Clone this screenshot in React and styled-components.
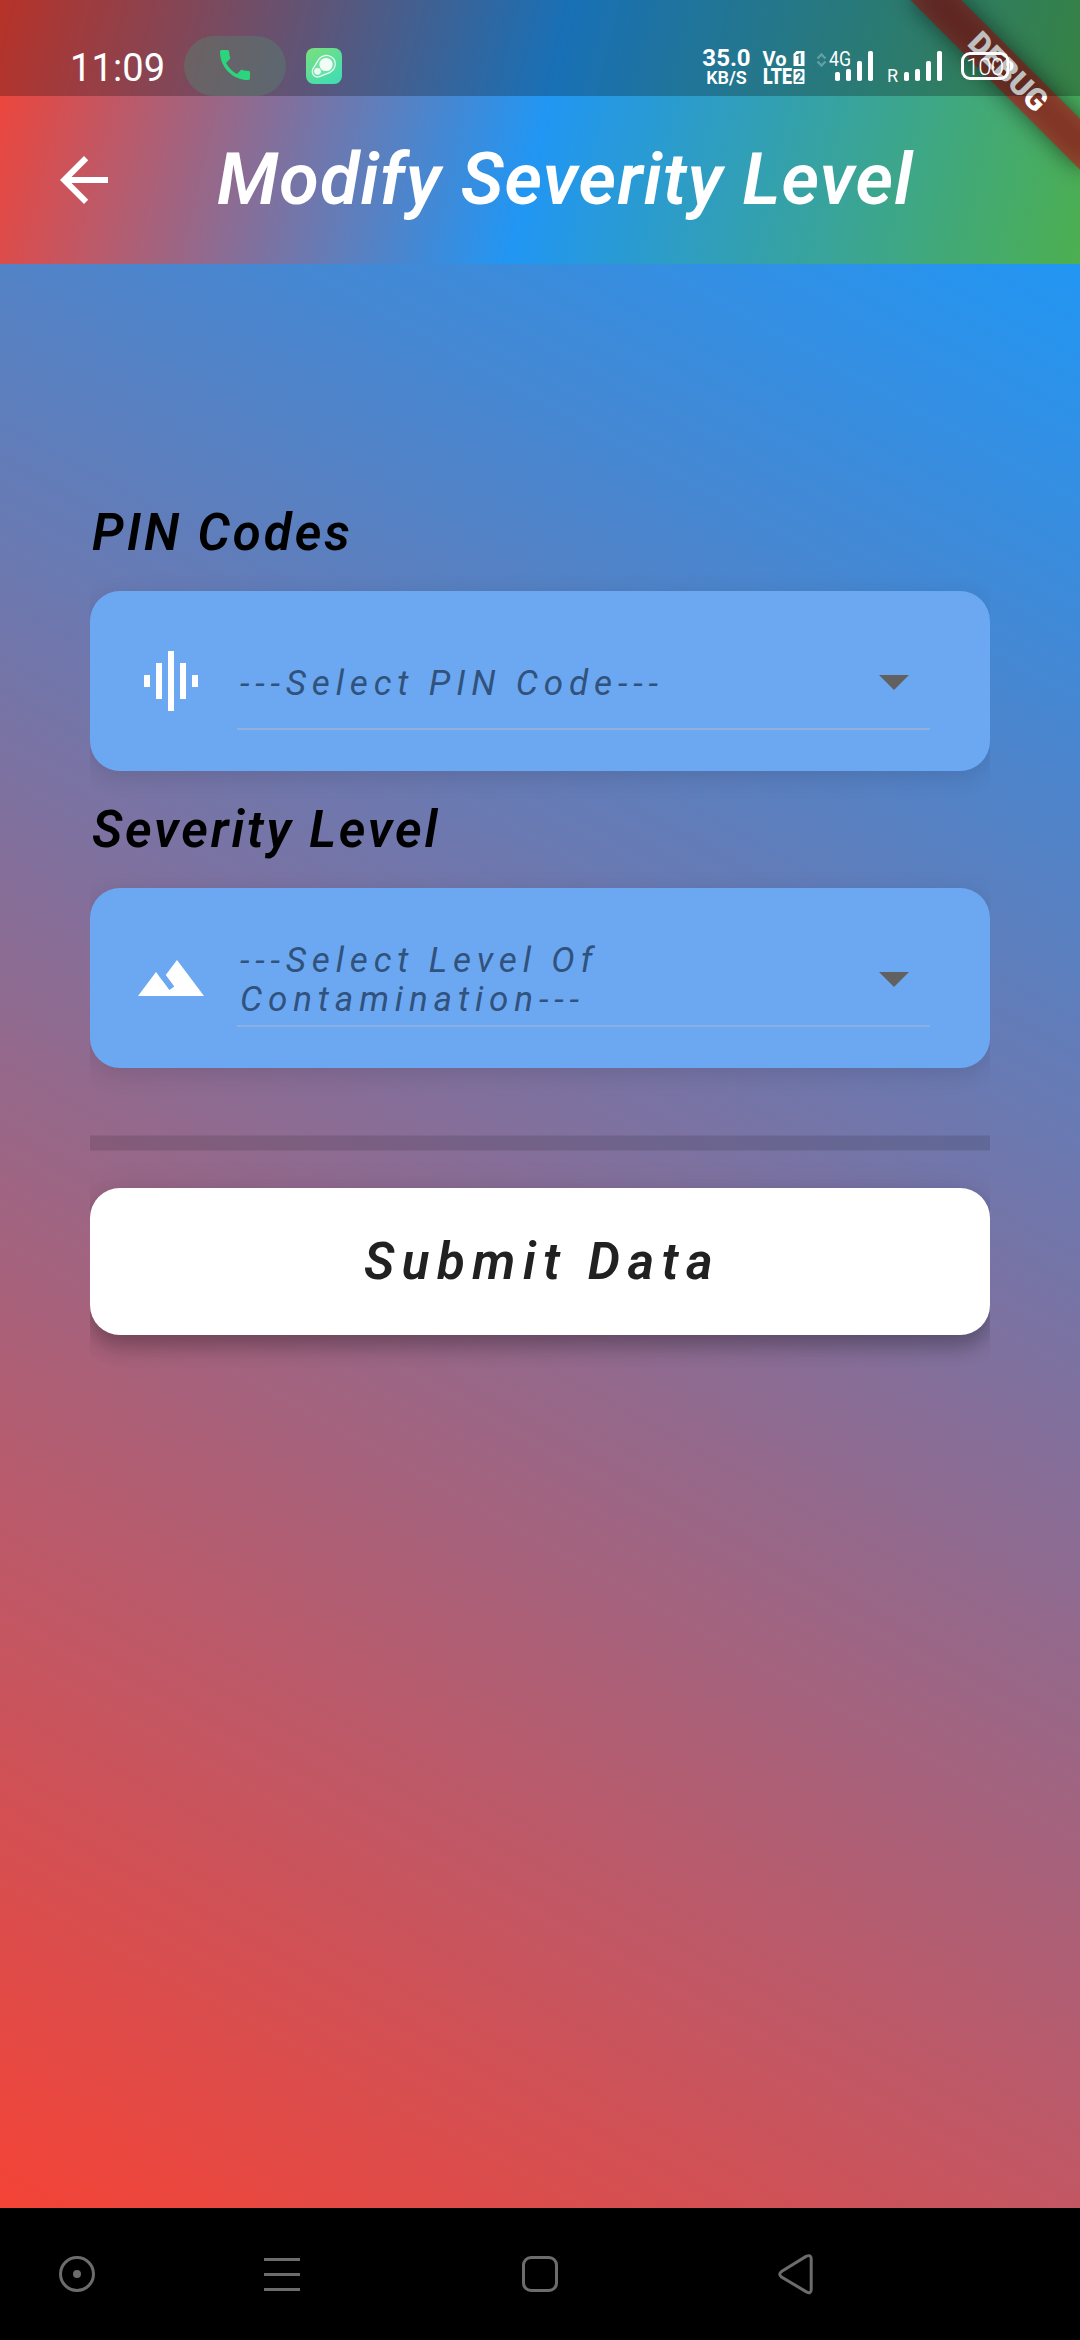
import React from "react";
import styled, { createGlobalStyle } from "styled-components";

const GlobalStyle = createGlobalStyle`
  * { box-sizing: border-box; }
  body { margin: 0; background: #000; }
`;

const Screen = styled.div`
  width: 1080px;
  height: 2340px;
  display: flex;
  flex-direction: column;
  overflow: hidden;
  font-family: Roboto, "Noto Sans", sans-serif;
`;

/* ---------- App bar ---------- */

const AppBar = styled.header`
  position: relative;
  flex: 0 0 264px;
  display: flex;
  flex-direction: column;
  overflow: hidden;
  color: #fff;
  background: linear-gradient(103.74deg, #f44336 0%, #2196f3 50%, #4caf50 100%);
`;

const StatusBar = styled.div`
  position: relative;
  z-index: 2;
  flex: 0 0 96px;
  display: flex;
  align-items: flex-start;
  padding: 0 66px 0 70px;
  background: rgba(0, 0, 0, 0.25);
`;

const Clock = styled.time`
  width: 114px;
  padding-top: 46px;
  font-size: 38px;
  line-height: 44px;
  letter-spacing: 0.1px;
`;

const CallPill = styled.div`
  width: 102px;
  height: 60px;
  margin-top: 36px;
  display: flex;
  justify-content: center;
  padding-top: 9px;
  border-radius: 30px;
  background: rgba(88, 124, 110, 0.5);
`;

const AppBadge = styled.svg`
  width: 36px;
  height: 36px;
  margin: 48px 0 0 20px;
`;

const Indicators = styled.div`
  margin-left: auto;
  display: flex;
  align-items: flex-start;
`;

const NetSpeed = styled.div`
  width: 49px;
  margin-right: 11px;
  padding-top: 46px;
  display: flex;
  flex-direction: column;
  align-items: center;
  font-weight: 700;
  font-size: 24px;
  line-height: 24px;
`;

const NetUnit = styled.span`
  font-size: 18px;
  line-height: 15px;
  font-weight: 600;
`;

const IndicatorIcon = styled.svg`
  width: ${(p) => p.$width}px;
  height: 44px;
  margin: 46px ${(p) => p.$after}px 0 0;
  overflow: visible;
  font-family: Roboto, "Noto Sans", sans-serif;
`;

const DebugRibbon = styled.div`
  position: absolute;
  z-index: 1;
  left: 960px;
  top: 84px;
  width: 240px;
  height: 36px;
  display: flex;
  align-items: center;
  justify-content: center;
  transform-origin: 120px -84px;
  transform: rotate(45deg);
  font-size: 30.6px;
  line-height: 36px;
  font-weight: 900;

  &::before,
  &::after {
    content: "";
    position: absolute;
    inset: 0;
    z-index: -1;
  }

  &::before {
    background: rgba(0, 0, 0, 0.5);
    filter: blur(11.9px);
  }

  &::after {
    background: rgba(183, 28, 28, 0.627);
  }
`;

const Toolbar = styled.div`
  flex: 1;
  display: flex;
  align-items: center;
  padding-left: 48px;
`;

const MaterialIcon = styled.svg`
  flex: none;
  width: ${(p) => p.$size || 72}px;
  height: ${(p) => p.$size || 72}px;
  fill: ${(p) => p.$color || "#fff"};
`;

const Title = styled.h1`
  margin: 0 0 0 97px;
  font-size: 72px;
  line-height: 84px;
  font-style: italic;
  font-weight: 600;
  letter-spacing: 1.2px;
  white-space: nowrap;
`;

/* ---------- Form ---------- */

const Body = styled.main`
  flex: 1;
  display: flex;
  flex-direction: column;
  padding: 0 90px;
  background: linear-gradient(29.05deg, #f44336, #2196f3);
`;

const Form = styled.div`
  flex: 1;
  display: flex;
  flex-direction: column;
  padding-top: 239px;
  overflow-x: clip;
`;

const Label = styled.div`
  height: 60px;
  margin-bottom: 28px;
  padding-left: 2px;
  font-size: 51px;
  line-height: 60px;
  font-style: italic;
  font-weight: 600;
  letter-spacing: ${(p) => p.$spacing}px;
  color: #000;
`;

const Card = styled.div`
  height: 180px;
  margin-bottom: ${(p) => p.$after}px;
  display: flex;
  align-items: center;
  gap: 30px;
  padding: 0 60px 0 45px;
  border-radius: 30px;
  background: #6ca8f1;
  box-shadow: 0 6px 24px rgba(0, 0, 0, 0.12);
`;

const Select = styled.div`
  flex: 1;
  height: 98px;
  display: flex;
  align-items: center;
  justify-content: space-between;
  padding-top: 2px;
  border-bottom: 2px solid ${(p) => p.$line};
`;

const Hint = styled.div`
  width: 500px;
  margin-top: 4px;
  padding-left: 3px;
  font-size: 35px;
  line-height: 39px;
  font-style: italic;
  letter-spacing: 5.88px;
  color: #30527c;
`;

const Divider = styled.div`
  height: 16px;
  margin-bottom: 37px;
  border: solid rgba(0, 0, 0, 0.06);
  border-width: 1px 0;
  background: rgba(0, 0, 0, 0.12);
  background-clip: padding-box;
`;

const SubmitButton = styled.button`
  height: 147px;
  padding: 0 0 0 4px;
  border: 0;
  border-radius: 30px;
  background: #fff;
  color: #212121;
  font: italic 600 51px/60px Roboto, "Noto Sans", sans-serif;
  letter-spacing: 7.6px;
  box-shadow: 0 12px 20px rgba(0, 0, 0, 0.26), 0 3px 36px rgba(0, 0, 0, 0.08);
`;

/* ---------- System navigation ---------- */

const NavBar = styled.nav`
  flex: 0 0 132px;
  display: flex;
  align-items: center;
  padding-left: 57px;
  background: #000;
`;

const NavIcon = styled.svg`
  width: 40px;
  height: 44px;
  margin-right: ${(p) => p.$after}px;
  fill: none;
  stroke: #6c6c6c;
  stroke-width: 3;
`;

function Bars({ x }) {
  return (
    <g fill="#fff">
      <rect x={x} y="26" width="5" height="9" rx="1.8" />
      <rect x={x + 11} y="23" width="5" height="12" rx="1.8" />
      <rect x={x + 22} y="15" width="5" height="20" rx="1.8" />
      <rect x={x + 33} y="5" width="5" height="30" rx="1.8" />
    </g>
  );
}

const ICONS = {
  back: "M20 11H7.83l5.59-5.59L12 4l-8 8 8 8 1.41-1.41L7.83 13H20v-2z",
  call: "M6.62 10.79c1.44 2.83 3.76 5.14 6.59 6.59l2.2-2.2c.27-.27.67-.36 1.02-.24 1.12.37 2.33.57 3.57.57.55 0 1 .45 1 1V20c0 .55-.45 1-1 1-9.39 0-17-7.61-17-17 0-.55.45-1 1-1h3.5c.55 0 1 .45 1 1 0 1.25.2 2.45.57 3.57.11.35.03.74-.25 1.02l-2.2 2.2z",
  wave: "M7 18h2V6H7v12zm4 4h2V2h-2v20zm-8-8h2v-4H3v4zm12 4h2V6h-2v12zm4-8v4h2v-4h-2z",
  landscape: "M14 6l-3.75 5 2.85 3.8-1.6 1.2C9.81 13.75 7 10 7 10l-6 8h22L14 6z",
  dropdown: "M7 10l5 5 5-5z",
};

function Icon({ name, size, color }) {
  return (
    <MaterialIcon viewBox="0 0 24 24" $size={size} $color={color}>
      <path d={ICONS[name]} />
    </MaterialIcon>
  );
}

function SelectCard({ icon, hint, line, after }) {
  return (
    <Card $after={after}>
      <Icon name={icon} />
      <Select $line={line}>
        <Hint>{hint}</Hint>
        <Icon name="dropdown" color="#616161" />
      </Select>
    </Card>
  );
}

export default function App() {
  return (
    <Screen>
      <GlobalStyle />
      <AppBar>
        <StatusBar>
          <Clock>11:09</Clock>
          <CallPill>
            <Icon name="call" size={40} color="#2bd47d" />
          </CallPill>
          <AppBadge viewBox="0 0 36 36">
            <defs>
              <linearGradient id="badge" x1="0" y1="0" x2="0.6" y2="1">
                <stop offset="0" stopColor="#7be07c" />
                <stop offset="1" stopColor="#45dcb0" />
              </linearGradient>
            </defs>
            <rect width="36" height="36" rx="8" fill="url(#badge)" />
            <path
              d="M13.2 10.6 L7 20.6 C4.6 25.6 8.6 30.4 13.4 28.6 L23.6 24.6 C30.6 21 31 12.2 25.6 9 C21.4 6.4 16 7.2 13.2 10.6 Z"
              fill="rgba(255,255,255,0.12)"
              stroke="#e6fbef"
              strokeWidth="1.2"
            />
            <circle cx="20" cy="16.5" r="6.6" fill="#f2fdf7" />
            <circle cx="11.5" cy="23.3" r="3.4" fill="#eafbf2" />
          </AppBadge>
          <Indicators>
            <NetSpeed>
              35.0
              <NetUnit>KB/S</NetUnit>
            </NetSpeed>
            <IndicatorIcon $width={43} $after={12} viewBox="0 0 43 44">
              <g fill="#fff" fontWeight="700">
                <text x="0.5" y="19.5" fontSize="20.5" textLength="24" lengthAdjust="spacingAndGlyphs">Vo</text>
                <text x="1" y="37.5" fontSize="21.5" fontWeight="900" textLength="29" lengthAdjust="spacingAndGlyphs">LTE</text>
                <path d="M34.500 5H42.500V20H31.500V8Z" />
                <rect x="31.5" y="23" width="11" height="15" rx="1" />
              </g>
              <g fill="#277b8b" fontWeight="700" fontSize="15" textAnchor="middle">
                <text x="37" y="18">1</text>
                <text x="37" y="36">2</text>
              </g>
            </IndicatorIcon>
            <IndicatorIcon $width={56} $after={14} viewBox="0 0 56 44">
              <g fill="none" stroke="#fff" strokeOpacity="0.28" strokeWidth="2.4">
                <path d="M0.5 12.5L4.5 8.5L8.5 12.5M0.5 15.5L4.5 19.5L8.5 15.5" />
              </g>
              <text x="12" y="19.5" fontSize="20.5" fill="#fff" textLength="22" lengthAdjust="spacingAndGlyphs">4G</text>
              <Bars x={18} />
            </IndicatorIcon>
            <IndicatorIcon $width={57} $after={17} viewBox="0 0 57 44">
              <text x="0" y="36" fontSize="18" fill="#fff">R</text>
              <Bars x={17} />
            </IndicatorIcon>
            <IndicatorIcon $width={53} $after={0} viewBox="0 0 53 44">
              <rect x="1.5" y="7.5" width="45.5" height="25" rx="7.5" fill="none" stroke="#fff" strokeWidth="3" />
              <path d="M48.5 15a4 5 0 0 1 0 10z" fill="#fff" />
              <text x="5" y="28.5" fontSize="24" fontWeight="300" fill="#fff" textLength="38">100</text>
            </IndicatorIcon>
          </Indicators>
        </StatusBar>
        <DebugRibbon>DEBUG</DebugRibbon>
        <Toolbar>
          <Icon name="back" />
          <Title>Modify Severity Level</Title>
        </Toolbar>
      </AppBar>

      <Body>
        <Form>
          <Label $spacing={3}>PIN Codes</Label>
          <SelectCard icon="wave" hint="---Select PIN Code---" line="#90b1dc" after={29} />
          <Label $spacing={2.8}>Severity Level</Label>
          <SelectCard
            icon="landscape"
            hint="---Select Level Of Contamination---"
            line="#8bb0e1"
            after={67}
          />
          <Divider />
          <SubmitButton>Submit Data</SubmitButton>
        </Form>
      </Body>

      <NavBar>
        <NavIcon $after={167} viewBox="0 0 40 44">
          <circle cx="20" cy="22" r="16.5" />
          <circle cx="20" cy="22" r="4" fill="#6c6c6c" stroke="none" />
        </NavIcon>
        <NavIcon $after={216} viewBox="0 0 40 44">
          <path d="M0 7.5H36M0 22.5H36M0 37.5H36" />
        </NavIcon>
        <NavIcon $after={216} viewBox="0 0 40 44">
          <rect x="3.5" y="5.5" width="33" height="33" rx="7.5" />
        </NavIcon>
        <NavIcon $after={0} viewBox="0 0 40 44">
          <path d="M5.5 19.6L30 4.4Q35.2 2 35.2 7V37.5Q35.2 42.5 30 39.6L5.5 25Q2 22.300 5.5 19.6Z" />
        </NavIcon>
      </NavBar>
    </Screen>
  );
}
